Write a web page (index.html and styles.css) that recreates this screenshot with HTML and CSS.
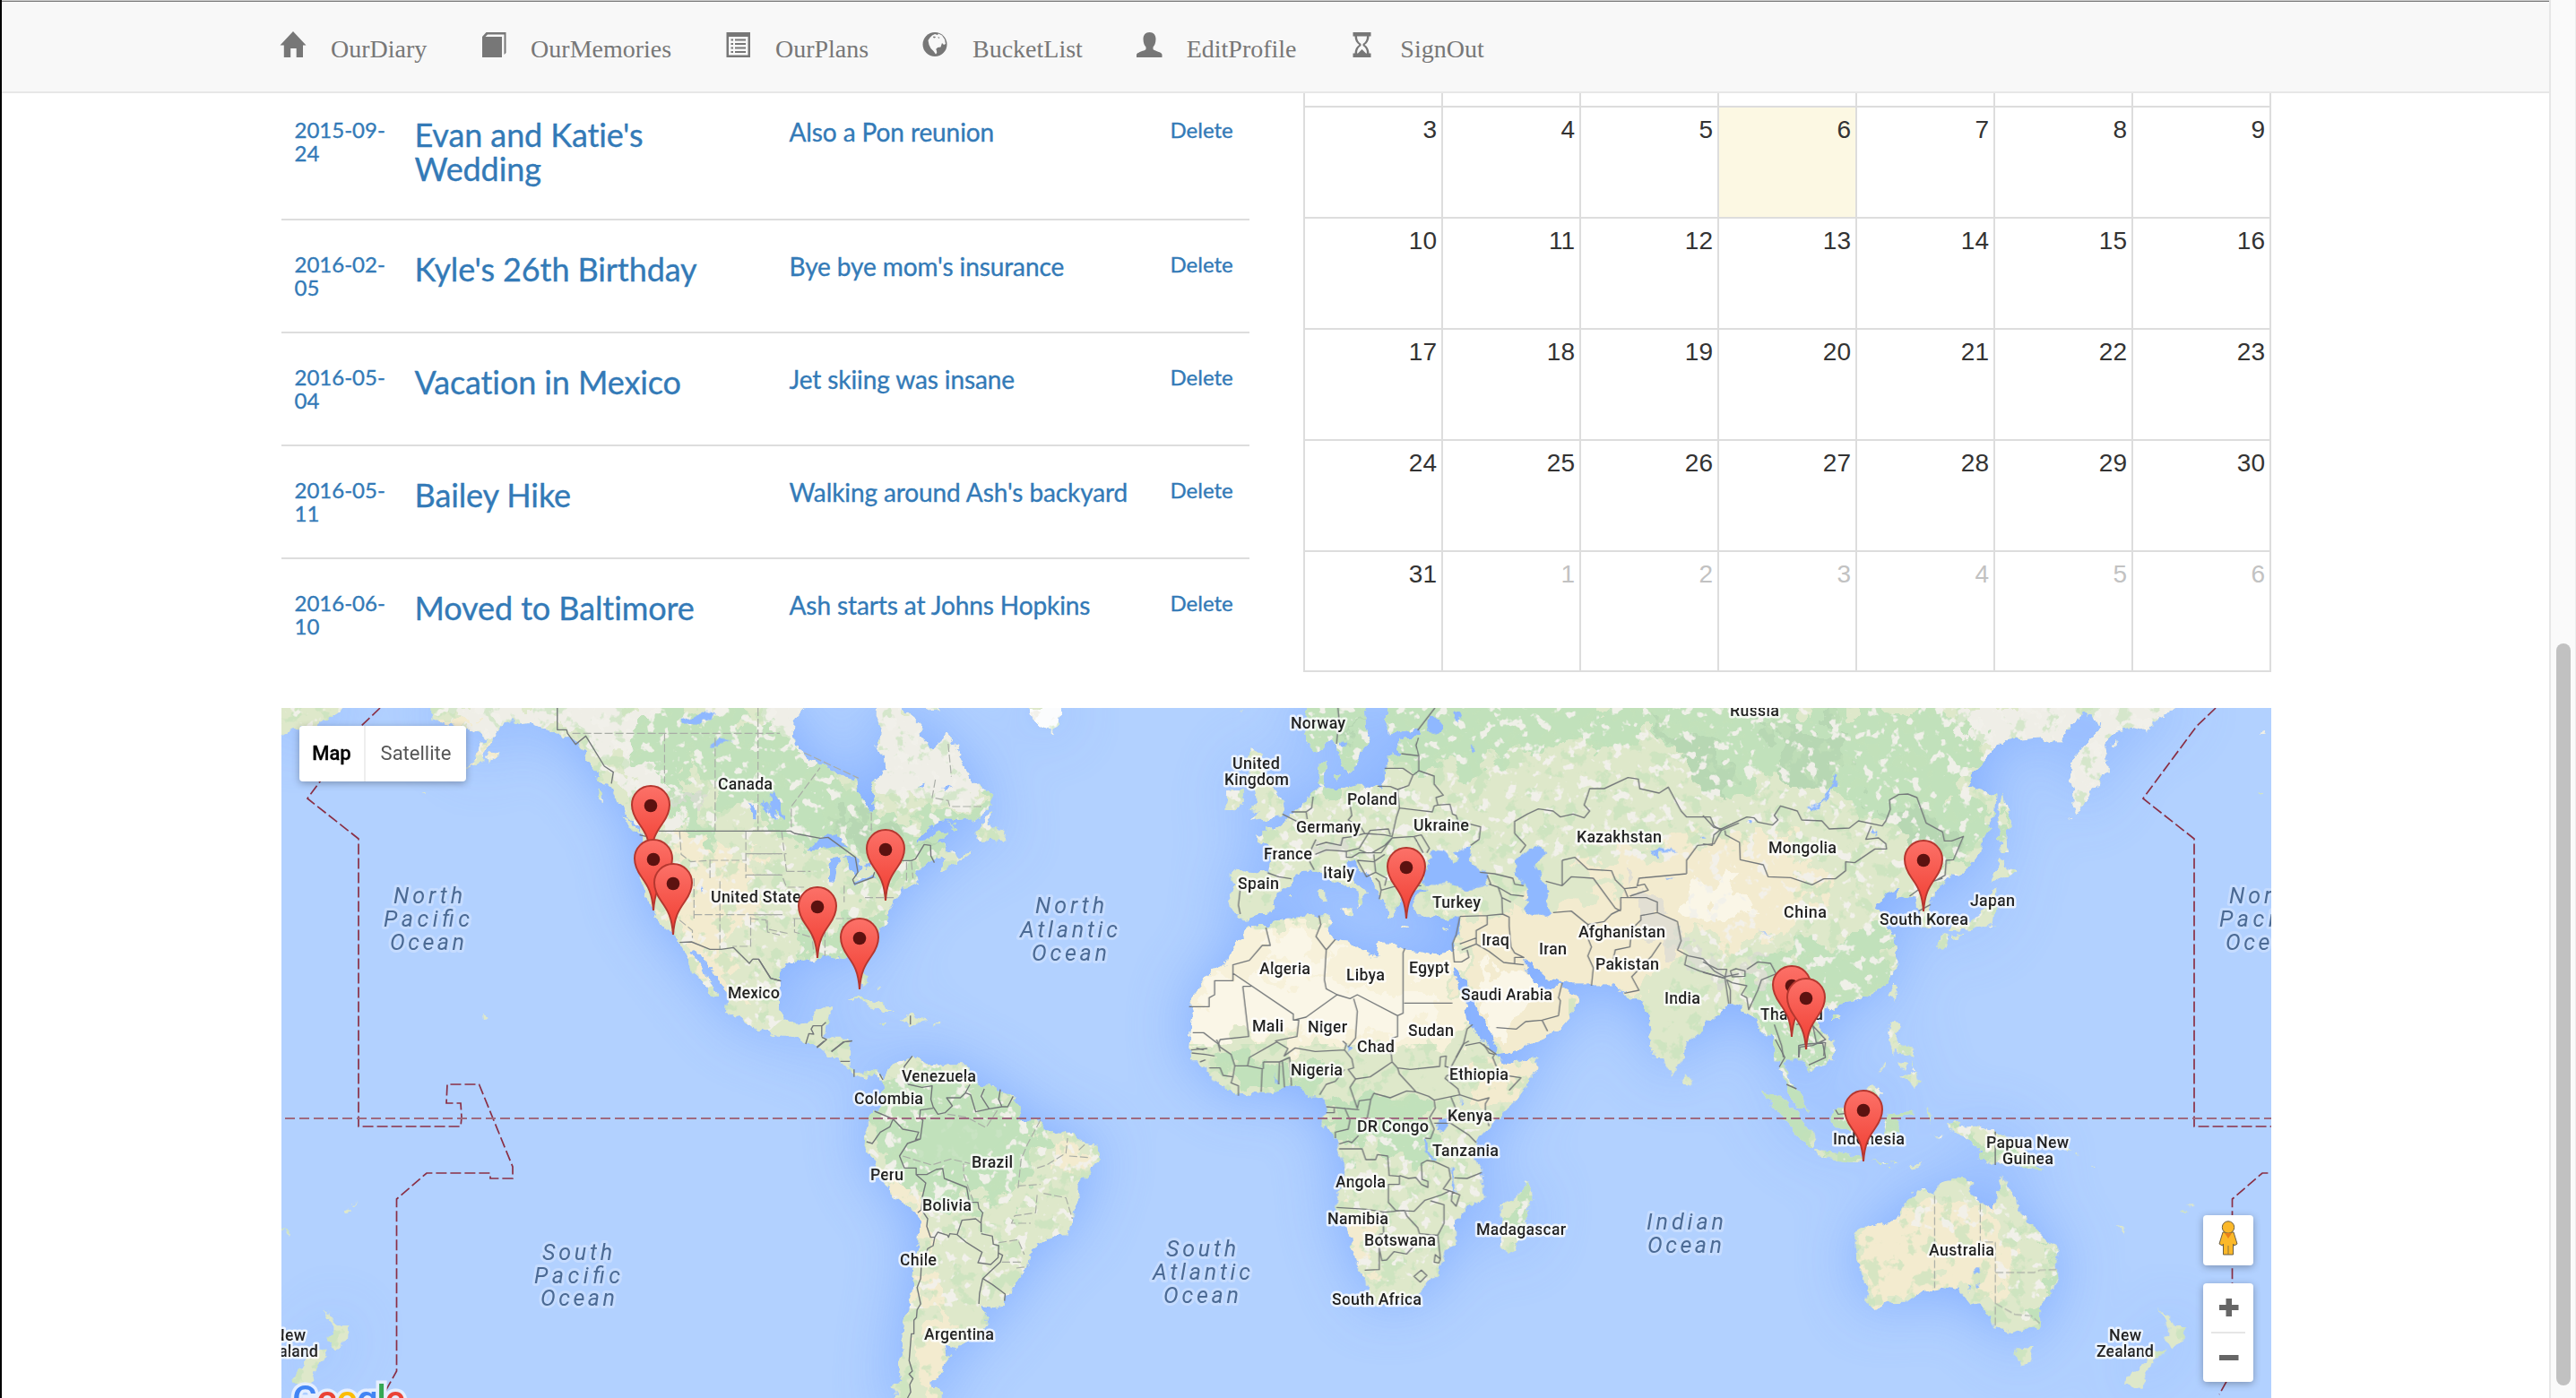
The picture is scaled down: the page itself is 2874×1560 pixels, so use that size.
FILE: index.html
```html
<!DOCTYPE html>
<html lang="en">
<head>
<meta charset="utf-8">
<title>OurDiary</title>
<link rel="stylesheet" href="styles.css">
</head>
<body>
<div class="page">
<nav class="navbar">
  <a class="nav-item"><svg class="nav-icon" viewBox="0 0 28 30"><path d="M14 0 28.5 15.5H25V29H17.7V19H11.2V29H3.8V15.5H-.5Z"/></svg>OurDiary</a>
  <a class="nav-item"><svg class="nav-icon" viewBox="0 0 28 30"><path d="M2 29V6L6.500 1H28.500V24L26.500 26V3.500H8L5.500 6H24V29Z"/></svg>OurMemories</a>
  <a class="nav-item"><svg class="nav-icon" viewBox="0 0 28 30"><path fill-rule="evenodd" d="M1.500 1H28V29H1.500ZM4 6V26.500H25.500V6ZM6.500 8.500h2.500v2H6.500Zm4.500 0h12v2h-12ZM6.500 13h2.500v2H6.500Zm4.500 0h12v2h-12ZM6.500 17.500h2.500v2H6.500Zm4.500 0h12v2h-12ZM6.500 22h2.500v2H6.500Zm4.500 0h12v2h-12Z"/></svg>OurPlans</a>
  <a class="nav-item"><svg class="nav-icon" viewBox="0 0 28 30"><circle cx="14" cy="14.500" r="13.500"/><path class="cut" d="M11 4.500 14 3 17 4 18 2.500 22 4.500 25 9 26 14 24 15 22 13 20.500 17.500 17 18 15.500 20 17 23 15 25.500 12.500 22 9.500 19 7.500 15 6.500 10 8.500 7Z"/><path d="M12.500 5.500 15 6 14 7.500 12 7ZM17.500 6 19.500 7 18 8ZM15.500 19.500 20 18 23.500 20 22 24.500 17 27Z"/></svg>BucketList</a>
  <a class="nav-item"><svg class="nav-icon" viewBox="0 0 28 30"><path d="M14.500 1C19 1 21.500 4 21.500 8.500C21.500 13 20 16 18.500 17.500V20C20 22 28.500 23 28.500 26V29H0V26C0 23 9 22 10.500 20V17.500C9 16 7.500 13 7.500 8.500C7.500 4 10 1 14.500 1Z"/></svg>EditProfile</a>
  <a class="nav-item"><svg class="nav-icon" viewBox="0 0 28 30"><path fill-rule="evenodd" d="M3.500 1H23.500V5.500H21.500C21.500 10 19.500 13 16.500 15C19.500 17 21.500 20 21.500 24.500H23.500V29H3.500V24.500H5.500C5.500 20 7.500 17 10.500 15C7.500 13 5.500 10 5.500 5.500H3.500ZM8 5.500C8 9.500 9.500 12 12.500 14V16C9.500 18 8 20.500 8 24.500H9L13.500 20 18 24.500H19C19 20.500 17.500 18 14.500 16V14C17.500 12 19 9.500 19 5.500Z"/></svg>SignOut</a>
</nav>
<main class="content">
  <div class="columns">
    <div class="diary">
      <div class="entry"><a class="date">2015-09-24</a><a class="title">Evan and Katie's Wedding</a><a class="desc">Also a Pon reunion</a><a class="delete">Delete</a></div>
      <div class="entry"><a class="date">2016-02-05</a><a class="title">Kyle's 26th Birthday</a><a class="desc">Bye bye mom's insurance</a><a class="delete">Delete</a></div>
      <div class="entry"><a class="date">2016-05-04</a><a class="title">Vacation in Mexico</a><a class="desc">Jet skiing was insane</a><a class="delete">Delete</a></div>
      <div class="entry"><a class="date">2016-05-11</a><a class="title">Bailey Hike</a><a class="desc">Walking around Ash's backyard</a><a class="delete">Delete</a></div>
      <div class="entry"><a class="date">2016-06-10</a><a class="title">Moved to Baltimore</a><a class="desc">Ash starts at Johns Hopkins</a><a class="delete">Delete</a></div>
    </div>
    <div class="calendar">
      <div class="week stub"><i></i><i></i><i></i><i></i><i></i><i></i><i></i></div>
      <div class="week"><i>3</i><i>4</i><i>5</i><i class="today">6</i><i>7</i><i>8</i><i>9</i></div>
      <div class="week"><i>10</i><i>11</i><i>12</i><i>13</i><i>14</i><i>15</i><i>16</i></div>
      <div class="week"><i>17</i><i>18</i><i>19</i><i>20</i><i>21</i><i>22</i><i>23</i></div>
      <div class="week"><i>24</i><i>25</i><i>26</i><i>27</i><i>28</i><i>29</i><i>30</i></div>
      <div class="week last"><i>31</i><i class="other">1</i><i class="other">2</i><i class="other">3</i><i class="other">4</i><i class="other">5</i><i class="other">6</i></div>
    </div>
  </div>
  <div class="map">
<svg class="world" viewBox="314 790 2220 770">
<defs>
  <linearGradient id="pinFill" x1="0" y1="0" x2="0" y2="1"><stop offset="0" stop-color="#fc7168"/><stop offset="1" stop-color="#f03c30"/></linearGradient>
  <filter id="glow" filterUnits="userSpaceOnUse" x="200" y="680" width="2440" height="990" color-interpolation-filters="sRGB"><feGaussianBlur stdDeviation="34"/></filter>
  <filter id="coast" filterUnits="userSpaceOnUse" x="300" y="780" width="2250" height="790" color-interpolation-filters="sRGB"><feTurbulence type="fractalNoise" baseFrequency=".09" numOctaves="3" seed="4"/><feDisplacementMap in="SourceGraphic" scale="11" xChannelSelector="R" yChannelSelector="G"/></filter>
  <filter id="ragged" filterUnits="userSpaceOnUse" x="300" y="780" width="2250" height="790" color-interpolation-filters="sRGB"><feTurbulence type="fractalNoise" baseFrequency=".035" numOctaves="4" seed="9"/><feDisplacementMap in="SourceGraphic" scale="70" xChannelSelector="R" yChannelSelector="G"/></filter>
  <filter id="pale" filterUnits="userSpaceOnUse" x="300" y="780" width="2250" height="790" color-interpolation-filters="sRGB"><feTurbulence type="fractalNoise" baseFrequency=".075" numOctaves="3" seed="21"/><feColorMatrix values="0 0 0 0 .95  0 0 0 0 .945  0 0 0 0 .92  12 0 0 0 -7.100"/><feComposite in2="SourceGraphic" operator="in"/></filter>
  <filter id="wood" filterUnits="userSpaceOnUse" x="300" y="780" width="2250" height="790" color-interpolation-filters="sRGB"><feTurbulence type="fractalNoise" baseFrequency=".05" numOctaves="4" seed="33"/><feColorMatrix values="0 0 0 0 .77  0 0 0 0 .885  0 0 0 0 .73  0 14 0 0 -7.900"/><feComposite in2="SourceGraphic" operator="in"/></filter>
  <g id="land">
    <g transform="translate(310 780) scale(.35714 .33333)"><path d="M480 0V75L530 88 560 92 590 100 650 130 625 170 590 235 640 200 665 140 690 110 705 80 730 72 760 85 790 80 830 100 870 115 900 125 940 150 960 190 980 230 1010 270 1040 300 1050 330 1080 360 1090 395 1120 430 1140 455 1140 480 1130 530 1125 570 1140 620 1145 660 1170 700 1185 740 1210 775 1235 788 1255 815 1275 850 1290 890 1290 915 1320 930 1340 965 1360 995 1375 1000 1375 985 1350 950 1330 910 1310 880 1292 850 1295 835 1320 850 1335 880 1360 910 1380 950 1410 990 1440 1020 1445 1050 1460 1085 1500 1105 1568 1132V0ZM0 0H235L180 50 140 75 120 95 70 100 40 100 0 125ZM1075 395 1100 400 1130 430 1125 445 1090 420ZM1000 300 1012 310 1022 345 1010 340ZM650 190 690 175 685 205 658 212ZM450 318 465 308 467 318ZM636 1052 652 1062 638 1074Z"/></g>
    <g transform="translate(840 780) scale(.35714 .33333)"><path d="M0 0H160V30L145 50 130 80 128 115 130 155 155 165 165 195 190 210 240 225 270 255 325 270 330 310 350 345 370 380 380 360 378 325 370 285 400 260 415 235 412 190 385 160 400 110 388 80 390 0H465V30L500 60 527 85 525 120 540 150 565 168 585 145 600 108 620 130 645 180 655 225 680 260 720 300 745 320 745 355 720 380 690 405 640 410 590 408 560 425 530 455 505 490 545 465 580 440 608 445 600 465 575 475 600 490 620 515 650 530 675 505 678 520 640 550 610 560 590 575 583 560 600 540 590 530 540 550 510 580 515 615 490 630 460 640 450 665 435 700 422 720 425 750 400 770 370 810 340 850 350 900 357 950 345 960 335 940 320 890 300 870 270 865 245 858 215 860 200 880 170 870 130 875 95 895 82 920 85 950 78 985 80 1030 100 1065 130 1088 165 1085 185 1075 195 1040 215 1030 250 1030 240 1065 228 1095 225 1135 250 1130 290 1130 307 1150 305 1200H240L200 1165 160 1150 130 1130 90 1130 40 1105-84 1050ZM745 378 735 420 780 435 795 480 760 485 740 470 700 475 695 465 715 430 730 390ZM295 1010 320 1000 360 1005 400 1025 440 1050 400 1050 380 1030 340 1012ZM455 1080 480 1060 520 1065 545 1080 500 1090ZM565 1083H586V1090H567ZM393 1086 415 1085 410 1092ZM610 418 645 432 640 438ZM480 0H560L582 40 560 42ZM388 962 397 975H390ZM845 0H960V50L950 95 935 118 910 95 880 75Z"/></g>
    <g transform="translate(900 1160) scale(.35714 .33333)"><path d="M0 0H140L132 30 137 70 130 90 150 110 180 120 200 103 225 108 240 130 250 110 270 80 310 62 325 50 335 70 350 60 380 80 440 85 500 85 500 110 540 150 600 165 645 190 660 220 672 250 655 270 690 270 730 280 760 310 830 312 875 345 905 355 912 395 885 440 850 490 845 560 830 610 810 655 755 665 700 705 692 760 665 805 635 840 615 890 590 898 540 890 565 930 560 960 530 1000 480 1020 470 1035 430 1020 435 1060 452 1065 430 1080 425 1115 390 1145 390 1165 418 1180 420 1250H280V1190L270 1165 290 1140 285 1110 300 1050 292 1030 298 970 320 900 330 830 335 750 345 690 350 600 340 575 290 540 255 510 235 460 205 400 178 365 180 320 190 290 190 265 215 240 235 215 240 180 235 140 215 115 190 120 185 135 150 120 130 100 105 75 80 45 40 25 0 10Z"/></g>
    <g transform="translate(1300 780) scale(.40816 .33333)"><path d="M385 0V70L385 110 390 150 410 180 430 165 455 140 470 150 475 200 485 235 515 240 530 200 545 160 562 130 548 90 545 0ZM603 0V80L610 115 640 112 690 100 700 125 650 128 635 150 645 180 610 195 600 235 600 280 590 295 550 290 520 290 490 300 455 300 437 298 432 260 445 240 445 200 418 220 420 255 430 300 400 320 380 335 370 370 345 385 325 415 300 435 280 425 280 445 245 455 255 470 285 490 290 530 285 580 250 580 190 575 180 590 190 620 175 680 180 715 200 718 215 740 230 738 255 720 280 720 300 690 305 650 345 615 350 600 375 575 410 575 430 580 450 600 490 625 525 645 530 670 525 700 545 680 540 650 555 655 530 620 505 600 490 570 495 540 515 545 530 570 560 600 575 630 585 670 610 700 610 725 625 730 625 700 640 690 645 660 670 640 720 640 680 665 675 695 690 730 740 730 770 742 805 730 800 790 785 845 740 850 700 840 650 835 620 815 585 815 580 860 530 845 500 815 460 808 445 780 455 745 440 720 370 730 300 740 270 760 230 760 215 790 180 840 165 890 130 910 105 940 75 990 65 1030 75 1060 68 1110 65 1160 72 1210H920L905 1190 870 1150 845 1110 825 1070 820 1020 800 960 785 910 790 900 820 950 845 1010 860 1060 895 1120 905 1185 960 1175 1035 1135 1085 1095 1110 1060 1135 1015 1120 990 1090 970 1080 950 1060 970 1020 970 1010 940 985 910 975 865 1000 885 1040 930 1085 945 1100 940 1110 955 1165 955 1225 955 1255 985 1270 1010 1300 1005 1310 1030 1320 1060 1325 1130 1335 1200H1420L1425 1145 1460 1110 1510 1060 1545 1020 1575 1030V0ZM235 165 262 180 255 210 280 250 310 330 325 355 320 390 230 410 260 380 235 375 250 340 245 310 230 260 225 200ZM170 310 215 300 215 350 195 372 165 375ZM480 705 518 700 510 727ZM420 640 437 640 437 680 423 682ZM640 758 670 762 668 767 642 766ZM757 766 782 760 768 772ZM460 255 480 250 470 275ZM205 38H212V44ZM341 660H348V668H341Z"/></g>
    <g transform="translate(1900 780) scale(.40816 .33333)"><path d="M-10 0H1117V30L1112 60 1080 90 1066 55 1040 50 1010 80 990 110 985 145 950 145 920 130 880 135 825 140 790 180 760 225 730 260 725 290 770 310 800 325 795 400 770 460 755 510 725 560 695 595 675 590 660 610 640 640 625 670 620 700 630 740 625 765 600 770 595 730 580 700 580 670 560 660 525 670 535 640 510 650 480 680 475 695 500 712 500 750 520 790 530 860 530 900 500 950 460 990 420 1010 370 1020 360 1045 335 1030 305 1075 330 1110 355 1150 355 1210H195V1130L190 1120 150 1120 150 1080 115 1050 105 1020 75 1020 30 1060-10 1095ZM1117 0H1330L1280 35 1240 70 1210 110 1170 95 1130 105 1110 130 1100 160 1110 240 1090 250 1085 290 1060 300 1050 330 1020 385 1010 350 1015 310 1005 260 1005 210 1040 160 1065 130 1085 95ZM785 640 805 640 800 700 795 755 770 765 740 770 700 775 665 780 680 760 730 745 755 720 780 690ZM648 790 670 795 660 840 645 830ZM680 790 712 785 700 800 682 805ZM810 530 830 560 860 580 820 600 785 612 800 575ZM820 310 830 370 845 430 825 440 830 510 815 510 810 440 810 350ZM520 960 530 965 520 1010 508 990ZM355 1060 377 1060 370 1080 350 1080ZM515 1085 540 1090 530 1130 545 1165 580 1195 520 1165 505 1130ZM1520 115 1540 105 1545 120ZM1518 312 1532 308 1525 320ZM1000 408 1010 395 1008 408ZM1115 150 1130 145 1120 160Z"/></g>
    <g transform="translate(1300 1160) scale(.40816 .33333)"><path d="M70 0 75 40 95 80 120 105 140 140 200 188 260 175 290 180 345 155 370 155 390 188 430 185 440 210 440 240 430 285 460 320 475 370 490 410 490 450 475 500 468 560 495 620 510 690 520 750 545 800 570 890 620 880 690 850 740 790 760 720 795 690 798 660 790 610 820 570 870 530 868 450 850 400 850 340 890 285 950 215 985 150 1017 95 1017 60 960 70 920 82 905 50 865 0ZM905 0 910 45 1022 0ZM990 470 1005 525 985 600 960 700 935 713 912 695 920 640 920 550 960 530ZM1425 105 1443 140 1435 158 1417 150ZM1335 0H1420L1415 70 1385 123 1365 80Z"/></g>
    <g transform="translate(1900 1160) scale(.62112 .33333)"><path d="M130 0H235V45L215 90 195 108 190 85 175 65 165 35 150 40 145 80 155 140 175 170 188 240 170 230 155 190 150 140 137 90 140 40ZM105 170 135 190 165 240 185 290 205 320 203 360 180 345 160 300 145 260 125 220ZM203 368 240 375 285 395 290 412 240 402 205 390ZM300 408 330 412 328 418ZM335 410 355 410 350 416ZM370 425 395 410 375 437ZM326 428 336 430 335 437ZM232 235 250 235 280 200 305 148 325 175 310 200 320 240 300 290 270 310 240 300 232 270ZM335 250 375 240 378 250 345 262 350 290 355 310 335 330 325 300ZM402 230 410 250 405 280ZM410 318 430 320 425 325ZM435 280 460 275 460 295 490 290 530 315 570 345 590 400 612 440 580 430 550 405 520 420 495 400 500 370 480 340 460 320 440 300ZM335 0 347 15 345 50 335 15ZM350 20 380 30 378 60 352 45ZM325 80 328 85 312 115ZM350 75 365 85 358 105ZM372 70 385 100 378 98ZM385 105 392 140 380 165 370 140 355 125ZM275 650 300 625 345 605 360 560 385 505 405 510 418 520 425 480 450 465 485 475 480 520 520 570 530 540 533 480 540 452 550 500 567 530 570 580 600 640 635 700 638 780 625 850 605 900 605 960 575 975 555 985 520 965 515 920 495 880 480 890 460 840 430 830 390 845 365 878 330 880 310 903 290 880 295 830 280 760 275 700ZM560 1030 592 1035 585 1085 572 1090 562 1060ZM820 900 835 930 845 960 868 960 862 1000 840 1040 828 1000 838 985 830 950ZM812 1030 828 1042 800 1100 790 1160 760 1160 762 1130 790 1085ZM740 620 748 625 761 652 750 640ZM857 570 869 575 860 580ZM870 560 880 545 878 555ZM650 355 662 365 655 370ZM668 378 676 388H670ZM698 425 705 432H698Z"/></g>
    <g transform="translate(310 1160) scale(.40816 .33333)"><path d="M125 900 145 930 160 960 197 960 190 1000 155 1043 138 1000 150 985 145 950ZM112 1030 135 1042 110 1090 90 1155H38L35 1140 70 1085ZM0 625 38 652 30 655ZM183 570 195 565 202 575 190 581ZM205 555 217 545 210 558Z"/></g>
  </g>
  <mask id="landMask" maskUnits="userSpaceOnUse" x="300" y="780" width="2250" height="790"><use href="#land" fill="#fff" filter="url(#coast)"/></mask>
  <g id="pin"><path d="M0 0C-1.500-20-6-27-13-37C-18-44-21-50-21-58A21 21 0 0 1 21-58C21-50 18-44 13-37C6-27 1.500-20 0 0Z"/><circle cy="-57" r="7.300"/></g>
  <path id="dateline" d="M424 790 403 810 343 891 400 936V1257H514L515 1247 514 1231H498L499 1210H534.500L572 1302V1315H547V1309H476L442.500 1338V1530L428 1556"/>
</defs>
<rect x="314" y="790" width="2220" height="770" fill="#b2d1ff"/>
<use href="#land" fill="#7aa7ff" filter="url(#glow)" opacity=".85"/>
<use href="#land" fill="#deE8ca" filter="url(#coast)"/>
<g mask="url(#landMask)">
  <g filter="url(#ragged)">
    <!-- tundra, ice and high mountains -->
    <path fill="#efeee7" d="M300 780H500L560 840 640 810 690 850 720 900 740 930 760 900 720 840 720 780ZM840 780H920V850L870 830ZM970 780H1070L1100 880 1060 900 1000 890 970 860ZM2180 780H2560V850L2330 940 2290 900 2290 830 2180 840Z"/>
    <path fill="#fbfcfd" d="M1120 780H1200V850H1120Z"/>
    <!-- woodland belts -->
    <path fill="#c1e1bb" d="M720 790 840 800 920 850 960 880 1010 920 1100 890 1110 910 1040 950 1020 990 960 960 890 940 840 910 760 850 800 960 780 970 750 880 700 830ZM890 1040 990 1010 1000 1060 960 1075 900 1070ZM1440 780 1560 780 1940 780 1930 830 1740 830 1640 860 1560 850 1500 870 1500 900 1460 890ZM1900 790 2160 790 2210 830 2180 900 2230 900 2200 980 2150 960 2110 920 2060 900 2000 850 1930 900 1900 880ZM2040 1040 2110 1040 2110 1100 2060 1130 2000 1140 1950 1100 2000 1060ZM1960 1100 2050 1150 2050 1240 2000 1300 1950 1250ZM2040 1220H2130V1300H2040ZM980 1230 1020 1190 1100 1210 1140 1240 1170 1270 1130 1340 1040 1350 990 1310ZM1480 1230 1590 1215 1600 1290 1550 1295 1490 1270ZM1370 1180 1470 1190 1490 1240 1440 1220 1380 1230ZM1700 1310 1720 1330 1700 1380 1690 1370ZM2180 1260 2290 1300 2290 1320 2200 1290ZM2240 1340 2300 1420 2290 1480 2270 1490 2290 1410Z"/>
    <path fill="#b7d7b3" d="M930 910 1010 920 1030 940 990 965 940 940ZM1960 810 2060 810 2050 870 1990 870ZM2080 890 2140 900 2190 950 2190 970 2130 940ZM1840 800 1930 820 1920 900 1880 850ZM1520 800 1540 790 1500 830Z"/>
    <!-- dry land -->
    <path fill="#f3ebcf" d="M1630 1030 1700 1010 1720 1020 1800 1000 1760 960 1830 950 1900 930 1980 930 2040 980 2020 1020 1960 1060 1870 1040 1840 1110 1790 1110 1760 1150 1690 1190 1640 1140ZM750 920 790 940 850 960 840 1010 800 1070 830 1120 780 1090 740 1020ZM1640 1190 1720 1180 1700 1230 1640 1240ZM1480 1350 1530 1360 1540 1440 1510 1430ZM1170 1260 1220 1290 1200 1310 1180 1300ZM960 1290 1030 1330 1040 1440 1060 1500 1050 1570 1020 1560 1030 1480 1020 1360ZM2060 1370 2140 1340 2220 1350 2250 1400 2230 1450 2150 1430 2090 1450ZM490 800 530 800 540 860 500 850Z"/>
    <path fill="#f7f1da" d="M1310 1060 1400 1040 1480 1020 1620 1040 1640 1160 1560 1170 1310 1155Z"/>
    <path fill="#faf6e7" d="M1330 1110 1400 1085 1540 1100 1600 1100 1610 1150 1320 1160ZM1650 1080 1720 1090 1720 1130 1660 1150ZM1880 1000 1930 980 1960 1010 1900 1030ZM1430 1040 1500 1060 1470 1090 1400 1070Z"/>
    <path fill="#dadad4" opacity=".7" d="M1810 980 1850 1000 1900 1070 1960 1080 1990 1070 1960 1095 1880 1080 1840 1040ZM740 860 790 900 780 910ZM1480 935 1510 945 1480 955Z"/>
  </g>
  <path fill="#fff" filter="url(#wood)" opacity=".6" d="M314 790H2534V1560H314ZM1310 1040V1165H1750V1110H1860L1880 1050H2000V950H1860L1740 960 1660 1030Z" fill-rule="evenodd"/>
  <path fill="#fff" filter="url(#pale)" opacity=".95" d="M314 790H2534V960H2260L2200 1260 1900 1200 1880 960 1300 1000V900H1150L800 1200H700ZM900 1180H1260V1460H900ZM1500 1260H1730V1430H1500ZM2040 1190H2310V1540H2290L2240 1440 2200 1380 2040 1350Z"/>
  <path fill="#c1e1bb" opacity=".85" d="M1010 1260 1060 1235 1130 1260 1090 1300 1030 1300Z"/>
</g>
<!-- inland water -->
<g fill="#8fb8ff" filter="url(#coast)">
  <g transform="translate(840 780) scale(.35714 .33333)"><path d="M170 502 200 475 235 448 265 455 280 480 300 500 250 492 215 500ZM242 535 270 530 262 570 255 615 238 612 238 560ZM270 520 320 530 338 560 325 600 308 565 295 530ZM315 615 375 588 378 600 320 622ZM345 555 380 545 380 560 350 566ZM60 310 85 340 100 400 92 405 70 360ZM30 330 50 370 42 380ZM595 290 620 300 600 308ZM525 285 535 290 522 300ZM-15 340 8 370 10 400 0 395Z"/></g>
  <g transform="translate(310 780) scale(.35714 .33333)"><path d="M1260 70 1300 60 1340 35 1370 50 1320 85 1270 85ZM1350 155 1380 135 1420 145 1365 160ZM1510 330 1540 370 1530 350 1545 320 1568 340 1555 405ZM1322 625 1332 628 1328 640Z"/></g>
  <g transform="translate(1300 780) scale(.40816 .33333)"><path d="M700 620 718 545 735 508 765 512 780 545 805 535 790 515 838 490 835 545 880 590 885 622 830 637 780 620 740 622ZM955 550 985 510 1020 497 1040 515 1010 560 1035 610 1055 640 1045 690 1055 715 1020 728 990 715 985 680 990 640 960 590ZM720 55 745 65 760 95 745 118 718 105ZM785 35 800 35 810 65 798 80ZM832 150 848 165 838 178ZM480 140 498 145 490 165ZM1330 510 1355 498 1405 508 1350 512 1340 540ZM1465 460 1480 470H1468ZM1115 530 1130 555 1120 540ZM1370 600 1392 602 1375 608Z"/></g>
  <g transform="translate(1900 780) scale(.40816 .33333)"><path d="M358 250 366 260 362 295 330 345 290 376 282 370 320 345 350 300ZM120 400 135 402 130 415ZM150 770 185 798 170 790ZM465 438 475 440 468 450Z"/></g>
  <g transform="translate(1300 1160) scale(.40816 .33333)"><path d="M745 270 760 258 775 262 778 290 768 308 745 306ZM710 330 718 332 722 370 736 408 728 405 715 370ZM778 430 786 432 788 480 800 515 785 490ZM803 190 815 220 808 215ZM490 15 512 30 502 45ZM300 110 306 150H300Z"/></g>
  <g transform="translate(1900 1160) scale(.62112 .33333)"><path d="M487 762 494 765V782H488ZM493 805 498 830 494 835ZM474 825 481 830 480 845Z"/></g>
</g>
<!-- state and province lines -->
<g class="states">
  <path transform="translate(310 780) scale(.35714 .33333)" d="M920 115H1568M1208 115V280M1366 130V440M1500 30V440M1255 443 1260 520 1290 545 1350 540V600M1350 540H1460M1462 443V600M1462 518H1568M1462 589H1568M1300 600V740M1300 722H1568M1381 610V838M1477 730V828H1420M1477 735 1525 740 1530 780 1568 790M1255 740 1295 775V800"/>
  <path transform="translate(840 780) scale(.35714 .33333)" d="M120 430V360L210 230M160 180 330 265M0 518H105M105 577H180M0 589H90L105 630H160M90 445 105 577M0 722H95M125 735H330M285 625V680M130 735V780L190 800M180 740 190 850M225 770V860M280 760 295 830M610 150 620 260M570 270 560 330 610 340 615 360H720M370 380V440M350 665H440M480 545V610M495 545 500 600M45 740V770L110 785"/>
  <path transform="translate(900 1160) scale(.35714 .33333)" d="M300 390 390 420 450 400 510 415M490 415 490 450 520 540M440 250 500 260 560 295 600 230M730 270 690 350 670 400 660 500M660 490 730 485M720 430 750 420 810 380 815 330M820 390 880 395M850 370 870 350M740 515 810 530 830 600M720 520 715 580 650 590 640 615 700 615M600 680 660 670 680 720M610 745H670M655 765 690 760"/>
  <path transform="translate(1900 1160) scale(.62112 .33333)" d="M416 522V832M498 550V678H525M525 678V960M525 780H595L605 772 637 770M525 883 560 920 590 925 605 950"/>
</g>
<!-- country borders -->
<g class="borders">
  <path transform="translate(310 780) scale(.35714 .33333)" d="M873 30V103H902L905 115 930 152 962 124 1020 225 1048 245 1042 283M1190 442H1568M1255 815 1292 813 1350 838H1385L1423 832 1473 885 1483 871H1502L1540 935 1568 943M1130 455 1150 460"/>
  <path transform="translate(840 780) scale(.35714 .33333)" d="M0 442H118L130 450 210 466 235 463 320 530 328 580 312 605 318 620 375 597 380 580M466 541H495L508 535 535 487 555 490 556 525 567 548M0 871H18L55 935 88 944M165 1155 175 1120 190 1122 182 1105 188 1094H215V1130M228 1082 215 1095M200 1168 230 1140 215 1132M245 1180 285 1148 310 1144M492 1060V1090"/>
  <path transform="translate(900 1160) scale(.35714 .33333)" d="M32 25 55 5M78 40 115 8 142 5M105 73H135M148 100V125M228 115 238 135M330 55 305 90 302 125 318 150 360 160 392 155 388 200 395 225 410 250 432 245 455 222 437 195 480 195 495 180 510 150M495 178 512 185 528 242 570 232 545 190 555 165M605 167 600 200 610 225 570 232M610 225 628 225 645 190M395 230 355 236 353 262 363 270 355 333 340 335 350 310 300 300 270 266 212 240M270 266 260 292 230 310 205 348 187 342M355 333 315 348 290 390 305 430 342 430V452H375L405 435 425 432 430 465 500 495 508 545H535L538 565 550 580 545 605 545 645M342 452 372 480 362 525 358 570 347 580M362 575 378 600 375 625 387 662 400 662 410 645 440 655 443 662 447 650 470 653 485 605 528 600 545 615M470 653 500 680 548 712 535 747 575 753 598 730 600 690 583 685 580 658 545 650M600 715 612 722 605 745 550 800 540 850 538 885M550 800 580 820 620 852 618 875M400 662 395 690 378 700 372 720 358 760 356 800 345 830 356 885 345 905 343 930 335 940 335 985 327 985 320 1075 330 1110 320 1120 332 1135 322 1155 325 1180 315 1200"/>
  <path transform="translate(1300 780) scale(.40816 .33333)" d="M472 30 475 70 468 150M737 30 690 105M692 130 685 155 693 190 645 183M693 190V240L677 255 650 232H600M580 292 615 293 635 303 665 290 677 255M693 240 735 258V285L760 322 740 330 745 355 778 352 785 385 795 390 800 408 862 428 858 470 835 490M635 303 640 365 730 378 735 358 745 355M640 365 632 395 620 460 600 455 545 450 535 430 500 405 510 390 505 355M404 327 400 365 385 378 345 378M385 378 388 402M320 385 360 410 410 430M412 470 400 500 395 545 407 572M412 490 440 480 480 490 485 465 515 460 545 450M410 520 440 505 495 510 530 500 545 470 560 440 610 435 615 455M495 510V530L510 530 530 515 565 515 600 490 620 465 680 460 705 515M530 505 550 515 590 515 620 465M680 460 700 455 722 500 715 515M525 540 570 545 600 520M525 540 550 595 575 580 570 520M575 600 585 612 590 640 625 628 700 625M590 640 585 670M575 580 605 600 600 625M280 582 310 595 345 602M205 635 200 690 205 720M860 580 900 585 950 600 955 620 980 625M885 620 910 630 920 665 945 680M880 590 890 620M910 630 945 655 980 660M920 665 922 720 880 725 805 728M880 725 880 755 850 775 850 800 805 820M850 800V820L810 840M850 820 885 845 925 882 980 890M922 720 940 730 940 760 945 830 955 850 980 865 955 865 955 885M805 730 795 790 785 820 790 880 810 880 830 865 825 840M955 450 955 410 990 385 1020 368 1060 375 1080 395 1115 385 1145 398 1160 375 1145 355 1155 320 1160 300 1200 300 1265 263 1293 268 1297 300 1350 315 1375 295 1410 375 1425 395 1490 395 1500 425 1520 440 1500 485 1455 490 1425 540 1425 585M955 450 985 490 970 515M1085 540 1120 530 1155 570 1220 575 1230 605 1255 635 1290 630M1085 540V625L1040 610M1085 625 1110 595 1170 600 1230 700 1245 710M1255 635 1265 665 1245 665 1245 705 1220 720 1200 745 1155 755 1110 710 1060 715M1155 755 1155 800 1165 830 1155 860 1170 900 1165 960M1270 660 1320 640 1310 620 1290 625 1295 600 1425 585M1265 665 1315 665 1345 680 1345 715 1300 725 1300 740 1275 770 1270 830 1230 840 1225 870M1345 715 1400 745 1410 810 1400 840 1430 860 1470 870 1500 910 1530 930 1568 920M1355 815 1330 860 1275 930 1295 975 1255 985M1425 860 1420 890 1460 910 1530 935 1540 1020M1520 440 1568 415M1075 1060 1080 1010 1075 1000 1085 950M1075 1060 1030 1075 985 1080 960 1105 905 1100M1030 1075 1045 1112M275 765 287 825 265 825 230 875 185 890V943H135V990L120 1000V1030H65M185 918 350 1055V1075L385 1065 470 990 440 970 435 940 440 840 465 805M420 725 425 755 412 795 440 840M470 990 505 1003 525 990 635 1060 650 1052V850L655 835M653 1018H785M350 1075 365 1075 360 1130 300 1145M212 962 228 1130 150 1140 145 1155M235 962H212M75 1117H105L145 1155 150 1180M515 1003 525 1045 520 1135 500 1165M635 1060V1130L620 1135 615 1190M840 1090 825 1105 815 1155 795 1200M820 1160 860 1150 905 1190M70 1175 115 1170"/>
  <path transform="translate(1900 780) scale(.40816 .33333)" d="M0 390 30 430 50 435 120 395 140 398 150 412 190 422 205 405 195 390 212 358 258 375 270 405 325 408 345 435 400 432 425 408 490 425 500 408 512 370 510 338 535 320 560 318 585 330 610 415 655 445 660 475 680 475 712 460 685 538 665 540 662 590 640 605M60 440 62 455 100 480 102 538 165 555 178 595 240 598 298 622 330 602 362 602 390 575 390 545 415 548 470 502 502 502 500 485 480 465 445 470 460 425M0 485 25 490 30 455 50 435M565 660 615 615 655 600M590 710 622 688M0 880 40 905 65 905 60 935 0 915M75 910 90 903 115 910 115 928 80 930ZM120 905 150 880 185 885 200 920 160 940 150 975 125 1040 120 1000 105 990 120 960 80 950 65 940 75 975 75 1020M200 920 225 935 250 1000M195 1090 215 1160 220 1200M255 1090 290 1080 335 1140 300 1160 265 1165 262 1200M300 1090 310 1150 335 1150 330 1195"/>
  <path transform="translate(1300 1160) scale(.40816 .33333)" d="M72 45 110 50 135 55M85 28 105 35M95 75 110 68M120 95 150 95 158 120 185 125 180 145 200 155V188M140 0 150 25 180 50 190 88 185 125M190 88 225 88 230 60 280 25 305 8 335 30 325 55 355 28 410 40 490 35 495 15 485 5M225 88 265 98 262 175M268 75 312 75 310 150M320 70 326 160M268 75V98M312 75 340 60 345 155M490 35 510 65 515 95 500 100 520 132 505 160 525 230 530 205 562 200 552 263M520 132 560 125 590 100 620 75 615 20M620 75 635 95 640 115 685 175 720 190 735 203 738 230 722 262 735 300 725 332 710 330M635 95 670 100 750 90 752 58 768 55 765 90 780 95 815 15 830 5M562 200 570 180 615 195 660 172 685 175M422 185 440 150 465 140 490 100M770 120 765 130 800 165 805 185 855 205 885 195 875 215 875 240 885 290M805 185 735 203M780 190 795 235 790 265M770 120 920 115M930 120 972 128 940 170M905 90 895 60 900 50 885 45 870 15M735 280H780L830 320 850 345M440 225 530 235M440 245H462V230M490 228 505 270 500 300 465 310V330M475 350 500 340 510 345 528 322M475 366H538L548 402H575L580 385 608 390 612 455 640 458V485H610V545L630 572M640 455 665 465 685 462 700 485 718 495V475L702 468 700 415 715 405 735 408 775 430 780 465 760 500 785 510M790 463 825 465 865 445M468 562 550 568 600 578 655 572M595 580 597 650 585 652V770L545 772M630 572 680 575 710 538 755 520 775 508M725 540 762 553V615L745 655 695 650 690 630 660 590 655 575M720 655H745L752 735M585 700 592 740 605 738 625 710 660 718 680 690M738 720 752 735 748 748 735 745ZM700 772 715 790 697 812 680 793ZM785 510 805 520 795 558 782 540 785 510"/>
  <path transform="translate(1900 1160) scale(.62112 .33333)" d="M525 308V420M130 0 147 60 137 92M172 60 172 20 185 15 215 12 220 60 190 85M150 150 168 165M238 235 243 250 270 245"/>
</g>
<use href="#dateline" class="dateline"/><use href="#dateline" class="dateline" x="2048"/>
<path class="equator" d="M318 1248H2534"/>
<g class="country">
<text x="801" y="881" textLength="61">Canada</text><text x="793" y="1007" textLength="110">United States</text><text x="812" y="1114" textLength="58">Mexico</text>
<text x="1440" y="813" textLength="61">Norway</text><text x="1375" y="858" textLength="53">United</text><text x="1366" y="876" textLength="72">Kingdom</text><text x="1503" y="898" textLength="56">Poland</text><text x="1446" y="929" textLength="72">Germany</text><text x="1577" y="927" textLength="62">Ukraine</text><text x="1759" y="940" textLength="95">Kazakhstan</text><text x="1410" y="959" textLength="54">France</text><text x="1476" y="980" textLength="35">Italy</text><text x="1381" y="992" textLength="46">Spain</text><text x="1598" y="1013" textLength="54">Turkey</text><text x="1761" y="1046" textLength="97">Afghanistan</text><text x="1653" y="1055" textLength="31">Iraq</text><text x="1717" y="1065" textLength="31">Iran</text><text x="1780" y="1082" textLength="71">Pakistan</text><text x="1405" y="1087" textLength="57">Algeria</text><text x="1502" y="1094" textLength="43">Libya</text><text x="1572" y="1086" textLength="45">Egypt</text><text x="1630" y="1116" textLength="102">Saudi Arabia</text><text x="1857" y="1120" textLength="40">India</text><text x="1397" y="1151" textLength="35">Mali</text><text x="1459" y="1152" textLength="44">Niger</text><text x="1571" y="1156" textLength="51">Sudan</text><text x="1514" y="1174" textLength="42">Chad</text>
<text x="1930" y="799" textLength="55">Russia</text><text x="1973" y="952" textLength="76">Mongolia</text><text x="1990" y="1024" textLength="48">China</text><text x="2198" y="1011" textLength="50">Japan</text><text x="2097" y="1032" textLength="99">South Korea</text><text x="1964" y="1138" textLength="70">Thailand</text>
<text x="1006" y="1207" textLength="83">Venezuela</text><text x="953" y="1232" textLength="77">Colombia</text><text x="1084" y="1303" textLength="46">Brazil</text><text x="971" y="1317" textLength="37">Peru</text><text x="1029" y="1351" textLength="55">Bolivia</text><text x="1004" y="1412" textLength="41">Chile</text><text x="1031" y="1495" textLength="78">Argentina</text>
<text x="1440" y="1200" textLength="58">Nigeria</text><text x="1617" y="1205" textLength="66">Ethiopia</text><text x="1615" y="1251" textLength="50">Kenya</text><text x="1514" y="1263" textLength="80">DR Congo</text><text x="1598" y="1290" textLength="74">Tanzania</text><text x="1490" y="1325" textLength="56">Angola</text><text x="1481" y="1366" textLength="68">Namibia</text><text x="1522" y="1390" textLength="80">Botswana</text><text x="1647" y="1378" textLength="100">Madagascar</text><text x="1486" y="1456" textLength="100">South Africa</text>
<text x="2045" y="1277" textLength="80">Indonesia</text><text x="2216" y="1281" textLength="92">Papua New</text><text x="2234" y="1299" textLength="57">Guinea</text><text x="2152" y="1401" textLength="73">Australia</text><text x="2353" y="1496" textLength="36">New</text><text x="2339" y="1514" textLength="64">Zealand</text><text x="305" y="1496" textLength="36">New</text><text x="291" y="1514" textLength="64">Zealand</text>
</g>
<g class="ocean">
<text x="439" y="1008" textLength="77">North</text><text x="428" y="1034" textLength="96">Pacific</text><text x="435" y="1060" textLength="83">Ocean</text>
<text x="1155" y="1019" textLength="77">North</text><text x="1138" y="1046" textLength="109">Atlantic</text><text x="1151" y="1072" textLength="84">Ocean</text>
<text x="605" y="1406" textLength="78">South</text><text x="596" y="1432" textLength="96">Pacific</text><text x="603" y="1457" textLength="83">Ocean</text>
<text x="1301" y="1402" textLength="78">South</text><text x="1286" y="1428" textLength="109">Atlantic</text><text x="1298" y="1454" textLength="84">Ocean</text>
<text x="1837" y="1372" textLength="86">Indian</text><text x="1838" y="1398" textLength="83">Ocean</text>
<text x="2487" y="1008" textLength="77">North</text><text x="2476" y="1034" textLength="96">Pacific</text><text x="2483" y="1060" textLength="83">Ocean</text>
</g>
<g class="pins"><use href="#pin" x="726" y="956"/><use href="#pin" x="729" y="1016"/><use href="#pin" x="751" y="1043"/><use href="#pin" x="988" y="1005"/><use href="#pin" x="912" y="1069"/><use href="#pin" x="959" y="1104"/><use href="#pin" x="1569" y="1025"/><use href="#pin" x="2146" y="1017"/><use href="#pin" x="1999" y="1157"/><use href="#pin" x="2015" y="1171"/><use href="#pin" x="2079" y="1296"/></g>
<text class="google" x="326" y="1576" textLength="126"><tspan fill="#4285f4">G</tspan><tspan fill="#ea4335">o</tspan><tspan fill="#fbbc05">o</tspan><tspan fill="#4285f4">g</tspan><tspan fill="#34a853">l</tspan><tspan fill="#ea4335">e</tspan></text>
</svg>
    <div class="map-type"><span class="active">Map</span><span>Satellite</span></div>
    <div class="map-tools">
      <div class="pegman"><svg viewBox="0 0 24 40"><g fill="#fbb829" stroke="#6b5f45" stroke-width="1"><path d="M6 13H18L22 26 18.500 28 17.500 26V38H6.500V26L5.500 28 2 26Z"/><circle cx="12" cy="7.500" r="6.700"/></g><path d="M8 14H16L12 20Z" fill="#e8801a"/><path d="M12 28V38" stroke="#8a7440"/></svg></div>
      <div class="zoom"><svg viewBox="0 0 56 54"><path d="M18 24H25.500V17H32V24H39.500V30H32V37H25.500V30H18Z" fill="#666"/></svg><hr><svg viewBox="0 0 56 54"><path d="M18 24H39.500V30H18Z" fill="#666"/></svg></div>
    </div>
  </div>
</main>
</div>
<div class="scrollbar"><div class="thumb"></div></div>
</body>
</html>
```
FILE: styles.css
```css
* { box-sizing: border-box; }
html, body { margin: 0; height: 1560px; overflow: hidden; }
body { display: flex; background: #fff; border-left: 2px solid #000; font-family: Lato, sans-serif; }
.page { flex: 1; height: 1560px; overflow: hidden; }
.navbar {
  display: flex; align-items: flex-start; height: 104px; padding: 33px 0 0 281px;
  background: #f8f8f8; border-top: 2px solid #777; border-bottom: 2px solid #e7e7e7;
  border-image: linear-gradient(#cfcfcf 0 1px, #777 1px 2px, #e7e7e7 2px) 2 0 2 0;
  font: 28px/40px "Liberation Serif", serif; color: #777;
}
.nav-item { display: flex; gap: 28px; padding: 0 29.8px 0 30px; white-space: nowrap; }
.nav-icon { width: 28px; height: 30px; fill: #777; overflow: visible; }
.nav-icon .cut { fill: #f8f8f8; }

.content { width: 2220px; margin-left: 312px; }
.columns { display: flex; justify-content: space-between; height: 686px; }

.diary { width: 1080px; color: #337ab7; font-variant-ligatures: none; -webkit-text-stroke: .35px #337ab7; }
.entry {
  display: grid; grid-template-columns: 134px 418px 425px 103px; align-items: start;
  height: 126px; padding-top: 36px; border-top: 2px solid #ddd;
}
.entry:first-child { height: 140px; padding-top: 28px; border-top: 0; }
.entry a { padding: 0 17px 0 14.500px; }
.date, .delete { font-size: 24px; line-height: 26px; }
.entry .delete { white-space: nowrap; padding-right: 0; }
.title { font-size: 36px; line-height: 38px; margin-top: -1px; letter-spacing: -.1px; }
.desc { font-size: 28px; line-height: 30px; letter-spacing: -.1px; white-space: nowrap; }

.calendar { width: 1080px; font: 28px/40px "Liberation Sans", Arial, sans-serif; color: #333; }
.week {
  display: grid; grid-template-columns: repeat(7, 154px); height: 124px;
  border-right: 2px solid #ddd; border-top: 2px solid #ddd;
}
.week.stub { height: 14px; border-top: 0; }
.week.last { height: 136px; border-bottom: 2px solid #ddd; }
.week i { font-style: normal; text-align: right; padding: 5px 5px 0 0; border-left: 2px solid #ddd; }
.week .today { background: #fcf8e3; }
.week .other { color: #c2c2c2; }

.map { position: relative; height: 770px; overflow: hidden; font-family: Roboto, sans-serif; }
.world { display: block; width: 2220px; height: 770px; }
.borders path { fill: none; stroke: #74787a; stroke-width: 1.4; vector-effect: non-scaling-stroke; stroke-linejoin: round; }
.states path { fill: none; stroke: #a9ada6; stroke-width: 1.2; stroke-dasharray: 9 3; vector-effect: non-scaling-stroke; }
.dateline { fill: none; stroke: #8a2f45; stroke-width: 1.7; stroke-dasharray: 12 4; }
.equator { stroke: #9f6a80; stroke-width: 2; stroke-dasharray: 11 5; }
.country { font: 500 18px Roboto, sans-serif; fill: #222; stroke: rgba(255,255,255,.75); stroke-width: 5; stroke-linejoin: round; paint-order: stroke; }
.country text, .ocean text { paint-order: stroke; }
.ocean { font: italic 400 25px Roboto, sans-serif; fill: #4b6a94; stroke: #c6dcff; stroke-width: 6; stroke-linejoin: round; }
.pins { fill: url(#pinFill); stroke: #b5372f; stroke-width: 2; }
#pin circle { fill: #5c1210; stroke: none; }
.google { font: 500 42px Roboto, sans-serif; stroke: #e4eeff; stroke-width: 7; paint-order: stroke; }

.map-type {
  position: absolute; left: 20px; top: 20px; display: flex; height: 62px; width: 186px;
  background: #fff; border-radius: 4px; box-shadow: 0 2px 8px rgba(0,0,0,.3);
  font-size: 22px; line-height: 61px; color: #565656;
}
.map-type span { flex: 1; text-align: center; }
.map-type .active { flex: 0 0 74px; font-weight: 500; color: #000; border-right: 2px solid #eee; -webkit-text-stroke: .3px #000; }
.map-tools { position: absolute; right: 20px; top: 566px; display: flex; flex-direction: column; gap: 20px; width: 56px; }
.pegman, .zoom { background: #fff; border-radius: 4px; box-shadow: 0 2px 8px rgba(0,0,0,.3); }
.pegman { height: 56px; display: flex; justify-content: center; align-items: center; }
.pegman svg { height: 40px; width: 24px; margin-top: -4px; }
.zoom { height: 110px; }
.zoom svg { display: block; width: 56px; height: 54px; }
.zoom hr { margin: 0 9px; border: 0; height: 2px; background: #e6e6e6; }

.scrollbar { width: 30px; height: 1560px; padding: 718px 5px 0 6px; background: #fafafa; border-left: 2px solid #e7e7e7; border-right: 1px solid #ececec; }
.thumb { width: 16px; height: 828px; border-radius: 8px; background: #c1c1c1; }
```
